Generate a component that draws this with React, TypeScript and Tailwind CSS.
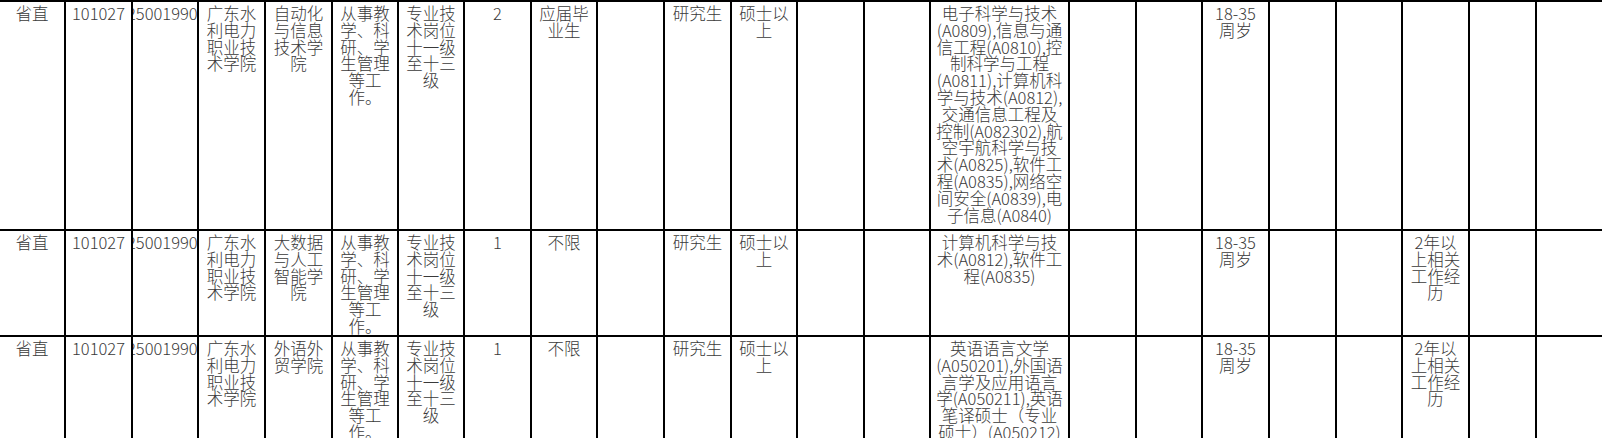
const ROWS: { h: string; cells: Record<number, string[]> }[] = [
  {
    h: 'h-[229px]',
    cells: {
      0: ['省直'],
      1: ['101027'],
      3: ['广东水', '利电力', '职业技', '术学院'],
      4: ['自动化', '与信息', '技术学', '院'],
      5: ['从事教', '学、科', '研、学', '生管理', '等工', '作。'],
      6: ['专业技', '术岗位', '十一级', '至十三', '级'],
      7: ['2'],
      8: ['应届毕', '业生'],
      10: ['研究生'],
      11: ['硕士以', '上'],
      14: [
        '电子科学与技术',
        '(A0809),信息与通',
        '信工程(A0810),控',
        '制科学与工程',
        '(A0811),计算机科',
        '学与技术(A0812),',
        '交通信息工程及',
        '控制(A082302),航',
        '空宇航科学与技',
        '术(A0825),软件工',
        '程(A0835),网络空',
        '间安全(A0839),电',
        '子信息(A0840)',
      ],
      17: ['18-35', '周岁'],
    },
  },
  {
    h: 'h-[106px]',
    cells: {
      0: ['省直'],
      1: ['101027'],
      3: ['广东水', '利电力', '职业技', '术学院'],
      4: ['大数据', '与人工', '智能学', '院'],
      5: ['从事教', '学、科', '研、学', '生管理', '等工', '作。'],
      6: ['专业技', '术岗位', '十一级', '至十三', '级'],
      7: ['1'],
      8: ['不限'],
      10: ['研究生'],
      11: ['硕士以', '上'],
      14: ['计算机科学与技', '术(A0812),软件工', '程(A0835)'],
      17: ['18-35', '周岁'],
      20: ['2年以', '上相关', '工作经', '历'],
    },
  },
  {
    h: 'h-[110px]',
    cells: {
      0: ['省直'],
      1: ['101027'],
      3: ['广东水', '利电力', '职业技', '术学院'],
      4: ['外语外', '贸学院'],
      5: ['从事教', '学、科', '研、学', '生管理', '等工', '作。'],
      6: ['专业技', '术岗位', '十一级', '至十三', '级'],
      7: ['1'],
      8: ['不限'],
      10: ['研究生'],
      11: ['硕士以', '上'],
      14: [
        '英语语言文学',
        '(A050201),外国语',
        '言学及应用语言',
        '学(A050211),英语',
        '笔译硕士（专业',
        '硕士）(A050212)',
      ],
      17: ['18-35', '周岁'],
      20: ['2年以', '上相关', '工作经', '历'],
    },
  },
]

const COLS = 23

function Cell({ idx, lines }: { idx: number; lines?: string[] }) {
  if (idx === 2) {
    // code column: number wider than the cell, clipped on the left
    return (
      <div className="flex overflow-hidden border-l-2 border-black pt-[3px]">
        <span className="ml-[-6px] whitespace-nowrap">250019900</span>
      </div>
    )
  }
  return (
    <div className={idx === 0 ? 'overflow-hidden pt-[3px] text-center' : 'overflow-hidden border-l-2 border-black pt-[3px] text-center'}>
      {lines?.map((l, i) => (
        <div key={i} className="whitespace-nowrap">{l}</div>
      ))}
    </div>
  )
}

export default function App() {
  return (
    <div className="h-[438px] w-[1602px] overflow-hidden bg-white font-['Noto_Sans_CJK_SC','Noto_Sans',sans-serif] text-[16.5px] leading-[16.8px] font-light text-[#3a3a3a]">
      {ROWS.map((row, r) => (
        <div
          key={r}
          className={`grid grid-cols-[64px_67px_66px_67px_67px_66px_66px_67px_66px_67px_67px_66px_67px_66px_139px_67px_66px_67px_67px_66px_67px_67px_67px] border-t-2 border-black ${row.h}`}
        >
          {Array.from({ length: COLS }).map((_, c) => (
            <Cell key={c} idx={c} lines={row.cells[c]} />
          ))}
        </div>
      ))}
    </div>
  )
}
